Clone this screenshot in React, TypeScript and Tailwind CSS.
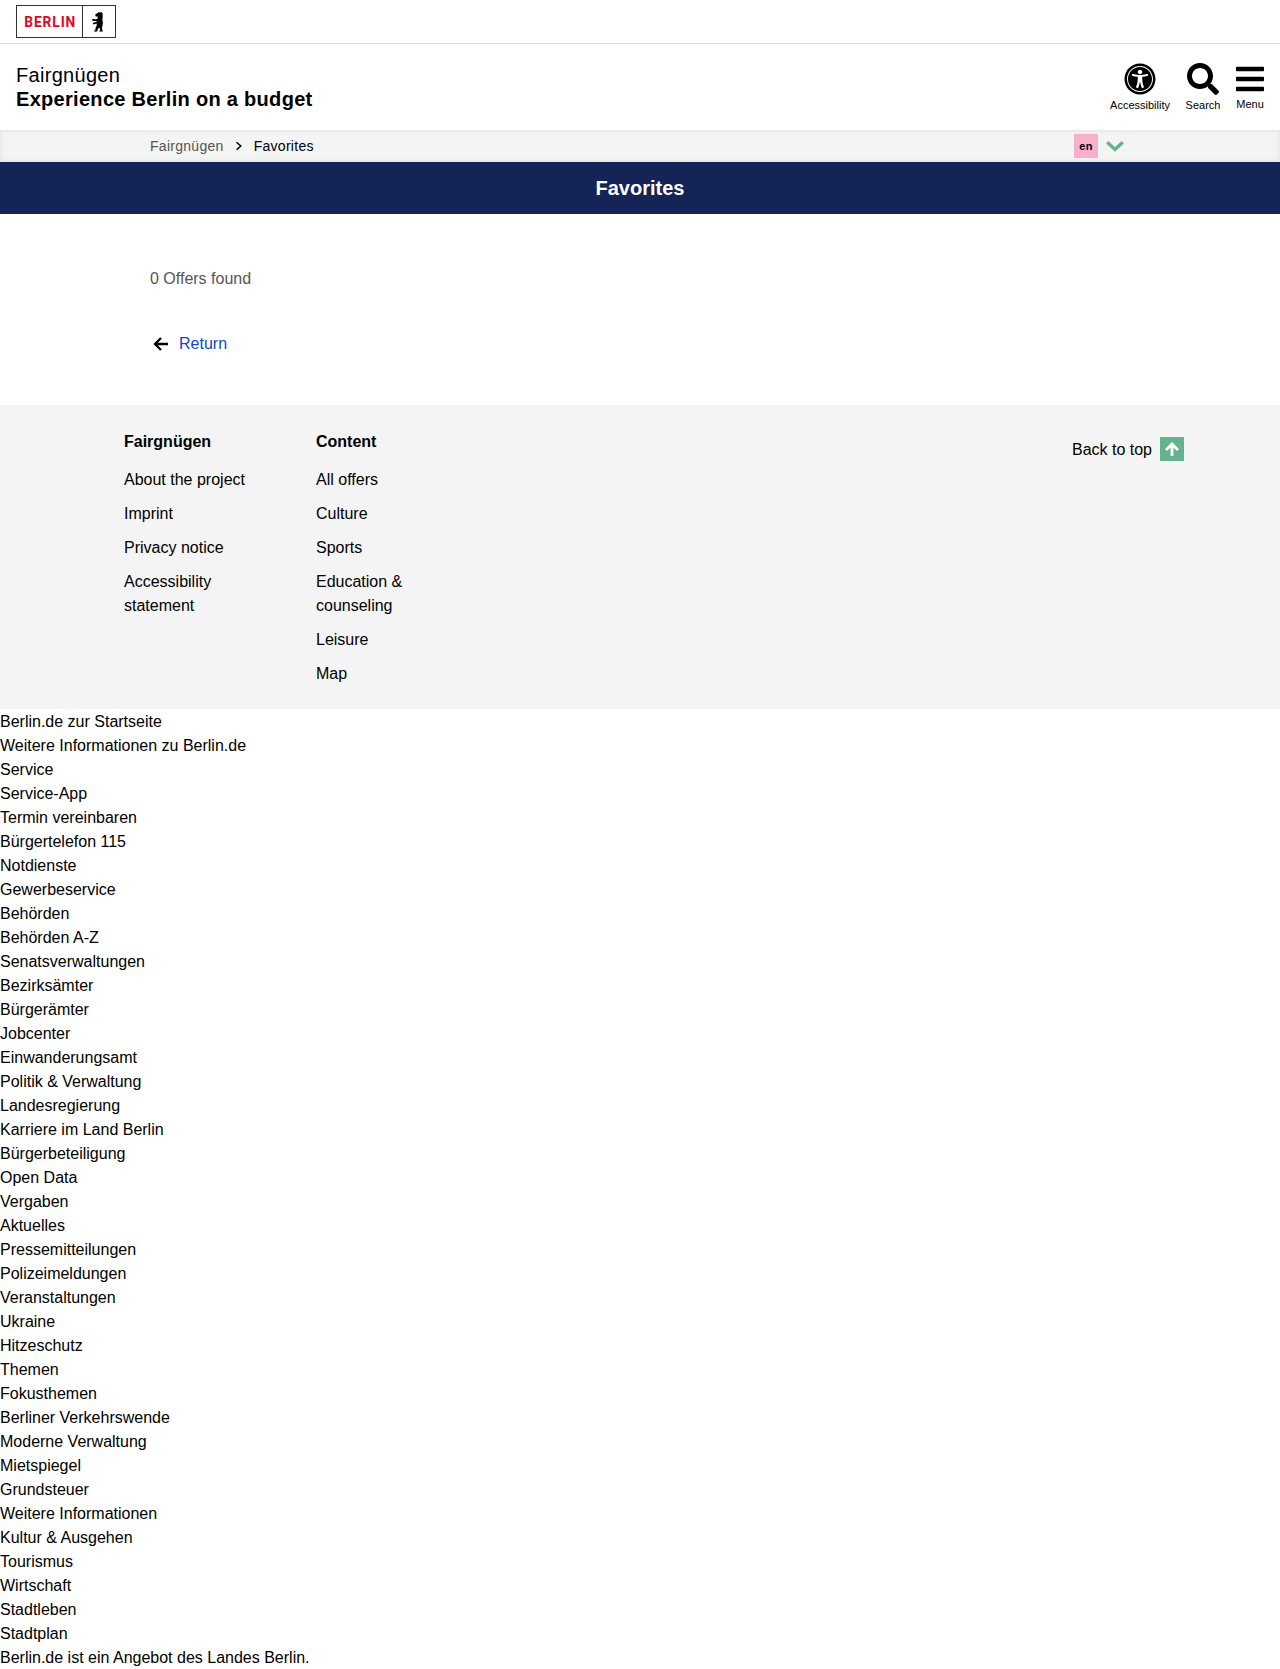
import { FaBars, FaSearch, FaUniversalAccess } from "react-icons/fa";

const columns = [
  {
    title: "Fairgnügen",
    items: ["About the project", "Imprint", "Privacy notice", "Accessibility statement"],
  },
  {
    title: "Content",
    items: ["All offers", "Culture", "Sports", "Education & counseling", "Leisure", "Map"],
  },
];

const portalLinks = [
  "Berlin.de zur Startseite", "Weitere Informationen zu Berlin.de", "Service", "Service-App",
  "Termin vereinbaren", "Bürgertelefon 115", "Notdienste", "Gewerbeservice", "Behörden",
  "Behörden A-Z", "Senatsverwaltungen", "Bezirksämter", "Bürgerämter", "Jobcenter",
  "Einwanderungsamt", "Politik & Verwaltung", "Landesregierung", "Karriere im Land Berlin",
  "Bürgerbeteiligung", "Open Data", "Vergaben", "Aktuelles", "Pressemitteilungen",
  "Polizeimeldungen", "Veranstaltungen", "Ukraine", "Hitzeschutz", "Themen", "Fokusthemen",
  "Berliner Verkehrswende", "Moderne Verwaltung", "Mietspiegel", "Grundsteuer",
  "Weitere Informationen", "Kultur & Ausgehen", "Tourismus", "Wirtschaft", "Stadtleben",
  "Stadtplan", "Berlin.de ist ein Angebot des Landes Berlin.",
];

function Logo() {
  return (
    <div className="flex h-[33px] w-[100px] border border-[#333]">
      <div className="flex w-[66px] items-center justify-center border-r border-[#333] pl-px font-['Roboto'] text-[15.5px] font-bold tracking-[1px] text-[#e40422]">
        <span className="scale-x-[0.89] whitespace-nowrap">BERLIN</span>
      </div>
      <svg viewBox="0 0 32 31" className="h-[31px] w-[32px]">
        <path d="M12.2 8.6 14.6 6.9 15.8 6 16.8 6.4 18.4 6 19.6 7.4 19.7 11 19.3 13.5 19.9 16.5 19.6 19.6 18.9 21.6 19.4 24.4 20.3 25.6H16.2L16.3 24.8 17.3 24.2 16.5 21.8 14.9 22.7 14.2 25.6H10.9L11 24.8 12.2 24.2 12.7 21.4 13.8 19.4 13.7 17.6 10.5 18.5 9.8 17.6 10.6 16.6 13.4 15.9 13.6 15.1 10.2 14.9 8.8 13.9 9.6 12.9 13.4 13.2 14.8 12.2 14.6 10.6 12.6 10.6Z" fill="#000" />
      </svg>
    </div>
  );
}

export default function App() {
  return (
    <div className="w-full bg-white font-['Liberation_Sans',sans-serif] text-base leading-6 text-black">
      <div className="h-11 border-b border-[#dfdfdf] pl-4 pt-[5px]">
        <Logo />
      </div>

      <header className="flex h-[86px] items-start justify-between px-4 pt-[19px]">
        <div className="text-xl leading-6 tracking-[0.3px]">
          <div>Fairgnügen</div>
          <div className="font-bold">Experience Berlin on a budget</div>
        </div>
        <nav className="flex items-start text-[11px] leading-4">
          <a className="flex w-[60px] flex-col items-center">
            <FaUniversalAccess className="size-8" />
            <span className="mt-[2px]">Accessibility</span>
          </a>
          <a className="ml-4 flex w-[34px] flex-col items-center">
            <FaSearch className="size-8" />
            <span className="mt-[2px]">Search</span>
          </a>
          <a className="ml-4 flex w-7 flex-col items-center">
            <FaBars className="size-8" />
            <span className="mt-px">Menu</span>
          </a>
        </nav>
      </header>

      <div className="flex h-8 items-center justify-between bg-[#f4f4f4] pl-[150px] pr-[156px] text-sm tracking-[0.28px] shadow-[inset_0_0_5px_rgba(0,0,0,0.1)]">
        <div className="flex items-center">
          <span className="text-[#555]">Fairgnügen</span>
          <svg viewBox="0 0 8 10" className="mx-[11px] h-[10px] w-2" fill="none" stroke="#000" strokeWidth="1.5">
            <path d="M1.5 1.3 5.8 5 1.5 8.7" />
          </svg>
          <span>Favorites</span>
        </div>
        <div className="flex items-center">
          <span className="flex size-6 items-center justify-center bg-[#f7b1cd] pt-px text-[11px] font-bold">en</span>
          <svg viewBox="0 0 18 12" className="ml-2 h-3 w-[18px]" fill="none" stroke="#66b28e" strokeWidth="3.4">
            <path d="M1.2 2.2 9 9.4 16.8 2.2" />
          </svg>
        </div>
      </div>

      <h1 className="flex h-[52px] items-center justify-center bg-[#142457] text-xl font-bold text-white">
        Favorites
      </h1>

      <main className="h-[191px] pl-[150px] pt-[53px]">
        <p className="text-[#555]">0 Offers found</p>
        <a className="mt-[41px] flex items-center text-[#1346c9]">
          <svg viewBox="0 0 15 14" className="ml-[3px] mr-[11px] h-[14px] w-[15px]" fill="none" stroke="#000" strokeWidth="2.3">
            <path d="M8 1 2 7l6 6M1.8 7H15" />
          </svg>
          Return
        </a>
      </main>

      <footer className="flex h-[304px] items-start bg-[#f4f4f4] pl-[124px] pr-24 pt-[25px]">
        {columns.map((column) => (
          <section key={column.title} className="mr-16 w-32">
            <h2 className="mb-[14px] font-bold">{column.title}</h2>
            <ul className="flex flex-col gap-[10px]">
              {column.items.map((item) => (
                <li key={item}>{item}</li>
              ))}
            </ul>
          </section>
        ))}
        <a className="ml-auto mt-[7px] flex items-start gap-2">
          <span className="pt-px">Back to top</span>
          <span className="flex size-6 items-center justify-center bg-[#66b28e]">
            <svg viewBox="0 0 14 14" className="size-[14px]" fill="none" stroke="#fff" strokeWidth="2.8">
              <path d="M1 8 7 2l6 6M7 2v12" />
            </svg>
          </span>
        </a>
      </footer>

      <ul className="-mb-px pt-px">
        {portalLinks.map((link) => (
          <li key={link}>{link}</li>
        ))}
      </ul>
    </div>
  );
}
